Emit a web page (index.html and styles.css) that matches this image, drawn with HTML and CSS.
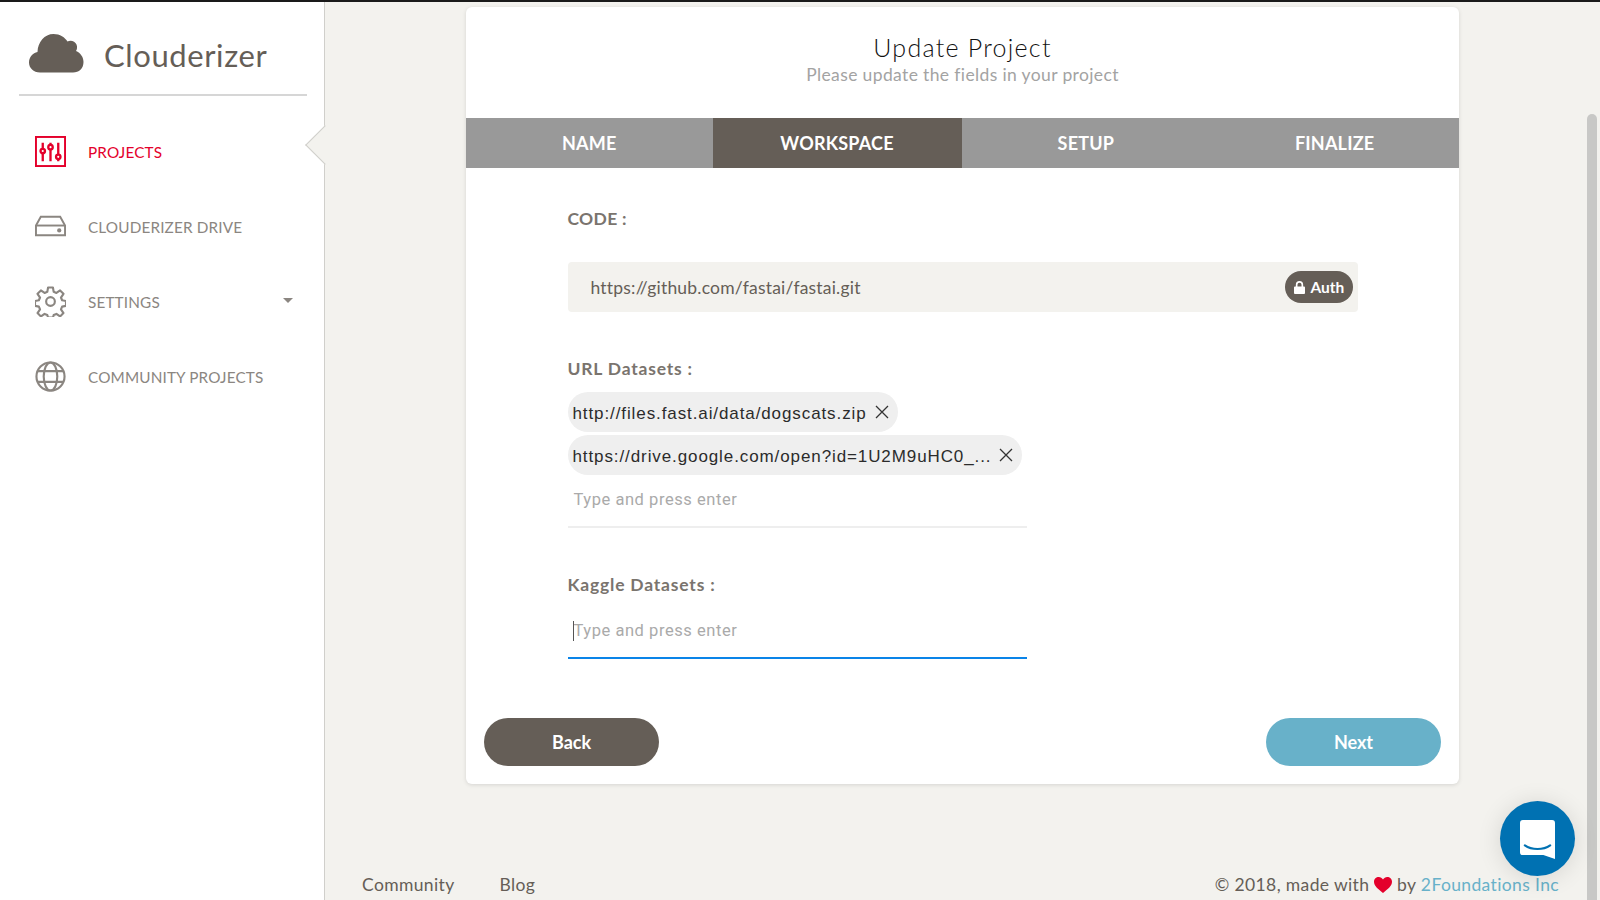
FILE: index.html
```html
<!DOCTYPE html>
<html lang="en">
<head>
<meta charset="utf-8">
<title>Clouderizer</title>
<link rel="stylesheet" href="styles.css">
</head>
<body>
<div class="topline"></div>
<div class="app">
  <aside class="sidebar">
    <div class="brand">
      <svg class="cloud" viewBox="0 0 55 40"><path d="M11 39.500C4.500 39.500 0 35 0 29.500C0 24 4 20 8.500 19C8.800 9 15.500 1 24.500 1C31 1 36 4.500 38.500 8.500C41 6.800 46 7.500 47.500 11.500C48.500 14 48 16.500 47 18C51.500 20 54.500 24 54.500 29C54.500 35.500 50 39.500 44 39.500Z"/></svg>
      <span class="brand-name">Clouderizer</span>
    </div>
    <nav class="nav">
      <a class="nav-item active">
        <svg class="nav-icon" viewBox="0 0 32 32"><rect x="1" y="1" width="30" height="30" fill="none" stroke="currentColor" stroke-width="2"/><g fill="none" stroke="currentColor" stroke-width="2.400"><path d="M8 7v6M8 18v8M16 7v2M16 14v12M24 7v12M24 23v3"/><circle cx="8" cy="15.500" r="2.300"/><circle cx="16" cy="11.500" r="2.300"/><circle cx="24" cy="21.500" r="2.300"/></g></svg>
        <span class="nav-label">PROJECTS</span>
      </a>
      <a class="nav-item">
        <svg class="nav-icon" viewBox="0 0 32 32"><g fill="none" stroke="currentColor" stroke-width="2"><path d="M1 15L6 6H26L31 15V25H1Z"/><path d="M1 15H31"/></g><circle cx="25" cy="20" r="2.200" fill="currentColor"/></svg>
        <span class="nav-label">CLOUDERIZER DRIVE</span>
      </a>
      <a class="nav-item">
        <svg class="nav-icon" viewBox="0 0 32 32"><g fill="none" stroke="currentColor" stroke-width="2.200" stroke-linejoin="round"><path d="M13.500 1.500h5l.8 4.500 2.800 1.200 3.800-2.600 3.500 3.500-2.600 3.800 1.200 2.800 4 .8v5l-4 .8-1.200 2.800 2.600 3.800-3.500 3.500-3.800-2.600-2.800 1.200-.8 2.700h-5l-.8-2.700-2.800-1.200-3.800 2.600-3.500-3.500 2.600-3.800-1.200-2.800-4-.8v-5l4-.8 1.200-2.800-2.600-3.800 3.500-3.500 3.800 2.600 2.800-1.200z"/><circle cx="16" cy="16" r="4.500"/></g></svg>
        <span class="nav-label">SETTINGS</span>
        <span class="caret"></span>
      </a>
      <a class="nav-item">
        <svg class="nav-icon" viewBox="0 0 32 32"><g fill="none" stroke="currentColor" stroke-width="2.200"><circle cx="16" cy="16" r="14.500"/><ellipse cx="16" cy="16" rx="7" ry="14.500"/><path d="M3 10.500H29M3 21.500H29"/></g></svg>
        <span class="nav-label">COMMUNITY PROJECTS</span>
      </a>
    </nav>
    <span class="notch"></span>
  </aside>
  <main class="main">
    <section class="card">
      <header class="card-head">
        <h1 class="title">Update Project</h1>
        <p class="subtitle">Please update the fields in your project</p>
      </header>
      <div class="tabs">
        <div class="tab">NAME</div>
        <div class="tab current">WORKSPACE</div>
        <div class="tab">SETUP</div>
        <div class="tab">FINALIZE</div>
      </div>
      <div class="form">
        <label class="label code-label">CODE :</label>
        <div class="code-box">
          <span class="code-value">https://github.com/fastai/fastai.git</span>
          <button class="auth"><svg class="lock" viewBox="0 0 12 14"><path d="M1 6h1V4a4 4 0 0 1 8 0v2h1a1 1 0 0 1 1 1v6a1 1 0 0 1-1 1H1a1 1 0 0 1-1-1V7a1 1 0 0 1 1-1zM3.800 6h4.400V4a2.200 2.200 0 0 0-4.400 0z"/></svg>Auth</button>
        </div>
        <label class="label url-label">URL Datasets :</label>
        <div class="chips">
          <div class="chip"><span>http://files.fast.ai/data/dogscats.zip</span><svg class="x" viewBox="0 0 14 14"><path d="M1 1L13 13M13 1L1 13"/></svg></div>
          <div class="chip"><span>https://drive.google.com/open?id=1U2M9uHC0_...</span><svg class="x" viewBox="0 0 14 14"><path d="M1 1L13 13M13 1L1 13"/></svg></div>
        </div>
        <div class="field first"><span class="placeholder">Type and press enter</span></div>
        <label class="label kaggle-label">Kaggle Datasets :</label>
        <div class="field focused"><span class="cursor"></span><span class="placeholder">Type and press enter</span></div>
      </div>
      <div class="actions">
        <button class="btn back">Back</button>
        <button class="btn next">Next</button>
      </div>
    </section>
    <footer class="footer">
      <div class="foot-links"><a>Community</a><a>Blog</a></div>
      <div class="copy">© 2018, made with <svg class="heart" viewBox="0 0 18 16"><path d="M9 16C4 12 0 9 0 4.800C0 2 2.200 0 4.800 0C6.500 0 8 .9 9 2.500C10 .9 11.500 0 13.200 0C15.800 0 18 2 18 4.800C18 9 14 12 9 16Z"/></svg> by <a class="company">2Foundations Inc</a></div>
    </footer>
  </main>
</div>
<div class="scrollbar"></div>
<div class="chat">
  <svg viewBox="0 0 36 42"><path d="M3 0H33a3 3 0 0 1 3 3V40L24 36H3a3 3 0 0 1-3-3V3a3 3 0 0 1 3-3Z" fill="#fff"/><path d="M5 26C12 31 24 31 31 26" fill="none" stroke="#0071b2" stroke-width="2.200" stroke-linecap="round"/></svg>
</div>
</body>
</html>
```
FILE: styles.css
```css
* { box-sizing: border-box; }
html, body { margin: 0; height: 900px; overflow: hidden; }
body { background: #f3f2ee; font-family: Lato, "Open Sans", sans-serif; color: #655e57; }
.topline { height: 2px; background: #1a1a1a; }
.app { display: flex; height: 898px; }

.sidebar { position: relative; z-index: 1; width: 325px; flex: none; background: #fff; border-right: 1px solid #d0cfcb; padding: 0 17px 0 19px; }
.brand { display: flex; align-items: center; height: 94px; padding: 10px 0 0 10px; border-bottom: 2px solid #d6d6d6; }
.cloud { width: 55px; height: 40px; fill: #655e57; flex: none; margin-top: -1px; }
.brand-name { margin-left: 20px; margin-top: 3px; font-size: 31px; color: #655e57; letter-spacing: .6px; }
.nav { display: flex; flex-direction: column; padding: 18px 0 0 16px; }
.nav-item { display: flex; align-items: center; height: 75px; color: #8b8681; }
.nav-icon { width: 31px; height: 31px; flex: none; }
.nav-label { margin-left: 22px; margin-top: 1px; font-size: 15.300px; font-weight: 400; letter-spacing: .15px; }
.nav-item.active { color: #e4002b; }
.caret { margin-left: auto; margin-right: 14px; margin-top: -3px; width: 0; height: 0; border-left: 5px solid transparent; border-right: 5px solid transparent; border-top: 5px solid #8b8681; }
.notch { position: absolute; right: -15px; top: 129px; width: 28px; height: 28px; background: #f3f2ee; border-left: 1px solid #d0cfcb; border-bottom: 1px solid #d0cfcb; transform: rotate(45deg); }

.main { flex: 1; display: flex; flex-direction: column; align-items: stretch; padding: 5px 0 0; min-width: 0; }
.card { width: 993px; height: 777px; margin-left: 141px; background: #fff; border-radius: 6px; box-shadow: 0 1px 4px rgba(0,0,0,.12); overflow: hidden; flex: none; }
.card-head { height: 111px; padding-top: 24px; text-align: center; }
.title { margin: 0; font-size: 25px; line-height: 32px; font-weight: 300; color: #111; letter-spacing: 1.250px; }
.subtitle { margin: 0; font-size: 17.500px; line-height: 24px; color: #a3a3a3; letter-spacing: .37px; }
.tabs { display: grid; grid-template-columns: 246.500px 249px 1fr 1fr; height: 50px; background: #999; }
.tab { display: flex; align-items: center; justify-content: center; color: #fff; font-size: 18px; font-weight: 700; letter-spacing: .2px; }
.tab.current { background: #655e57; }

.form { padding: 0 101.500px; }
.label { display: block; font-size: 17.500px; font-weight: 700; color: #7a746e; line-height: 24px; letter-spacing: .8px; }
.code-label { padding-top: 39px; letter-spacing: .3px; }
.code-box { display: flex; align-items: center; justify-content: space-between; height: 50px; margin-top: 31px; padding: 0 5px 0 23px; background: #f3f2ee; border-radius: 4px; }
.code-value { font-size: 17.500px; color: #655e57; letter-spacing: .2px; }
.auth { display: flex; align-items: center; gap: 6px; height: 32px; width: 68px; padding: 0 0 0 9px; border: 0; border-radius: 16px; background: #655e57; color: #fff; font: 700 15.500px Lato, sans-serif; }
.lock { width: 11px; height: 13px; fill: #fff; }
.url-label { padding-top: 45px; }
.chips { display: flex; flex-direction: column; align-items: flex-start; gap: 3px; margin-top: 11px; }
.chip { display: flex; align-items: center; gap: 6px; height: 40px; padding: 3px 9px 0 5px; border-radius: 20px; background: #efefef; font: 400 17px "Liberation Sans", sans-serif; color: #2b2b2b; letter-spacing: .9px; }
.x { width: 14px; height: 14px; fill: none; stroke: #333; stroke-width: 1.300; margin: -3px 0 0 2px; }
.field { position: relative; width: 459px; height: 52px; padding: 12px 0 0 6px; border-bottom: 2px solid #eeeeee; }
.field.first { height: 53px; padding-top: 13px; }
.field.focused { border-bottom-color: #0a84e8; margin-top: 10px; }
.placeholder { font: 400 16.500px/24px Roboto, sans-serif; color: #aaa; letter-spacing: .55px; }
.cursor { position: absolute; left: 5px; top: 14px; width: 1px; height: 20px; background: #555; }
.kaggle-label { padding-top: 45px; }
.actions { display: flex; justify-content: space-between; padding: 0 18px; margin-top: 59px; }
.btn { width: 175px; height: 48px; border: 0; border-radius: 24px; color: #fff; font: 700 18px Lato, sans-serif; }
.back { background: #655e57; }
.next { background: #68b1c9; }

.footer { display: flex; justify-content: space-between; align-items: center; margin-top: 89px; padding: 0 41px 0 37px; font-size: 17.500px; color: #655e57; line-height: 24px; letter-spacing: .37px; }
.foot-links { display: flex; gap: 45px; }
.copy { display: flex; align-items: center; white-space: pre; }
.heart { width: 18px; height: 16px; fill: #e4002b; }
.company { color: #68b1c9; }

.scrollbar { position: absolute; right: 3px; top: 114px; width: 10px; height: 800px; border-radius: 5px; background: #c8c8c6; }
.chat { position: absolute; left: 1500px; top: 801px; width: 75px; height: 75px; border-radius: 50%; background: #0071b2; box-shadow: 0 2px 24px rgba(0,0,0,.12); display: flex; align-items: center; justify-content: center; padding-top: 3px; }
.chat svg { width: 35px; height: 41px; }
```
